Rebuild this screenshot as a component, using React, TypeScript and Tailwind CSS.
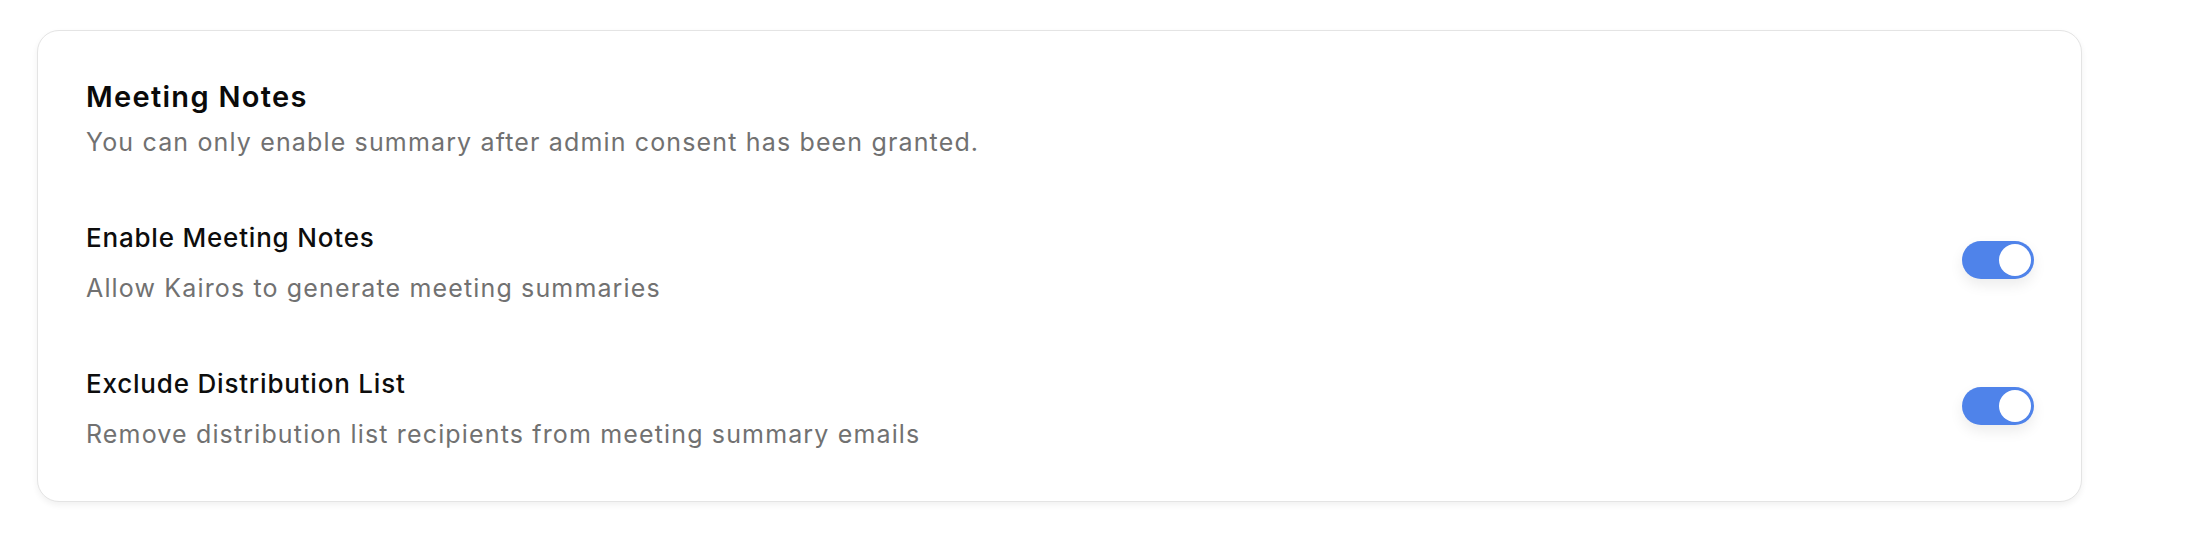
import React, { useState } from 'react';

type ToggleProps = {
  checked: boolean;
  onChange: (v: boolean) => void;
};

function Toggle({ checked, onChange }: ToggleProps) {
  return (
    <button
      type="button"
      role="switch"
      aria-checked={checked}
      onClick={() => onChange(!checked)}
      className={`relative mb-[6px] flex h-[38px] w-[72px] shrink-0 items-center rounded-full p-[3px] shadow-[0_6px_14px_rgba(0,0,0,0.08)] transition-colors ${
        checked ? 'justify-end bg-[#4f83ea]' : 'justify-start bg-[#d4d4d4]'
      }`}
    >
      <span className="block h-[32px] w-[32px] rounded-full bg-white" />
    </button>
  );
}

function SettingRow({
  title,
  description,
  checked,
  onChange,
}: {
  title: string;
  description: string;
  checked: boolean;
  onChange: (v: boolean) => void;
}) {
  return (
    <div className="flex items-center justify-between">
      <div className="flex flex-col">
        <div className="text-[26px] font-medium leading-[32px] tracking-[0.8px] text-[#0d0d0d]">{title}</div>
        <div className="mt-[19px] text-[25px] leading-[30px] tracking-[1.15px] text-[#717171]">{description}</div>
      </div>
      <Toggle checked={checked} onChange={onChange} />
    </div>
  );
}

export default function App() {
  const [notes, setNotes] = useState(true);
  const [exclude, setExclude] = useState(true);

  return (
    <div className="min-h-screen bg-white pl-[37px] pr-[104px] pt-[30px] font-['Inter',sans-serif]">
      <div className="rounded-[22px] border border-[#e4e4e4] bg-white pb-[52px] pl-[48px] pr-[47px] pt-[48px] shadow-[0_3px_6px_rgba(0,0,0,0.06)]">
        <h2 className="text-[29px] font-semibold leading-[36px] tracking-[1.3px] text-[#0a0a0a]">Meeting Notes</h2>
        <p className="mt-[12px] text-[25px] leading-[30px] tracking-[1.15px] text-[#717171]">
          You can only enable summary after admin consent has been granted.
        </p>

        <div className="mt-[65px] flex flex-col gap-[65px]">
          <SettingRow
            title="Enable Meeting Notes"
            description="Allow Kairos to generate meeting summaries"
            checked={notes}
            onChange={setNotes}
          />
          <SettingRow
            title="Exclude Distribution List"
            description="Remove distribution list recipients from meeting summary emails"
            checked={exclude}
            onChange={setExclude}
          />
        </div>
      </div>
    </div>
  );
}
